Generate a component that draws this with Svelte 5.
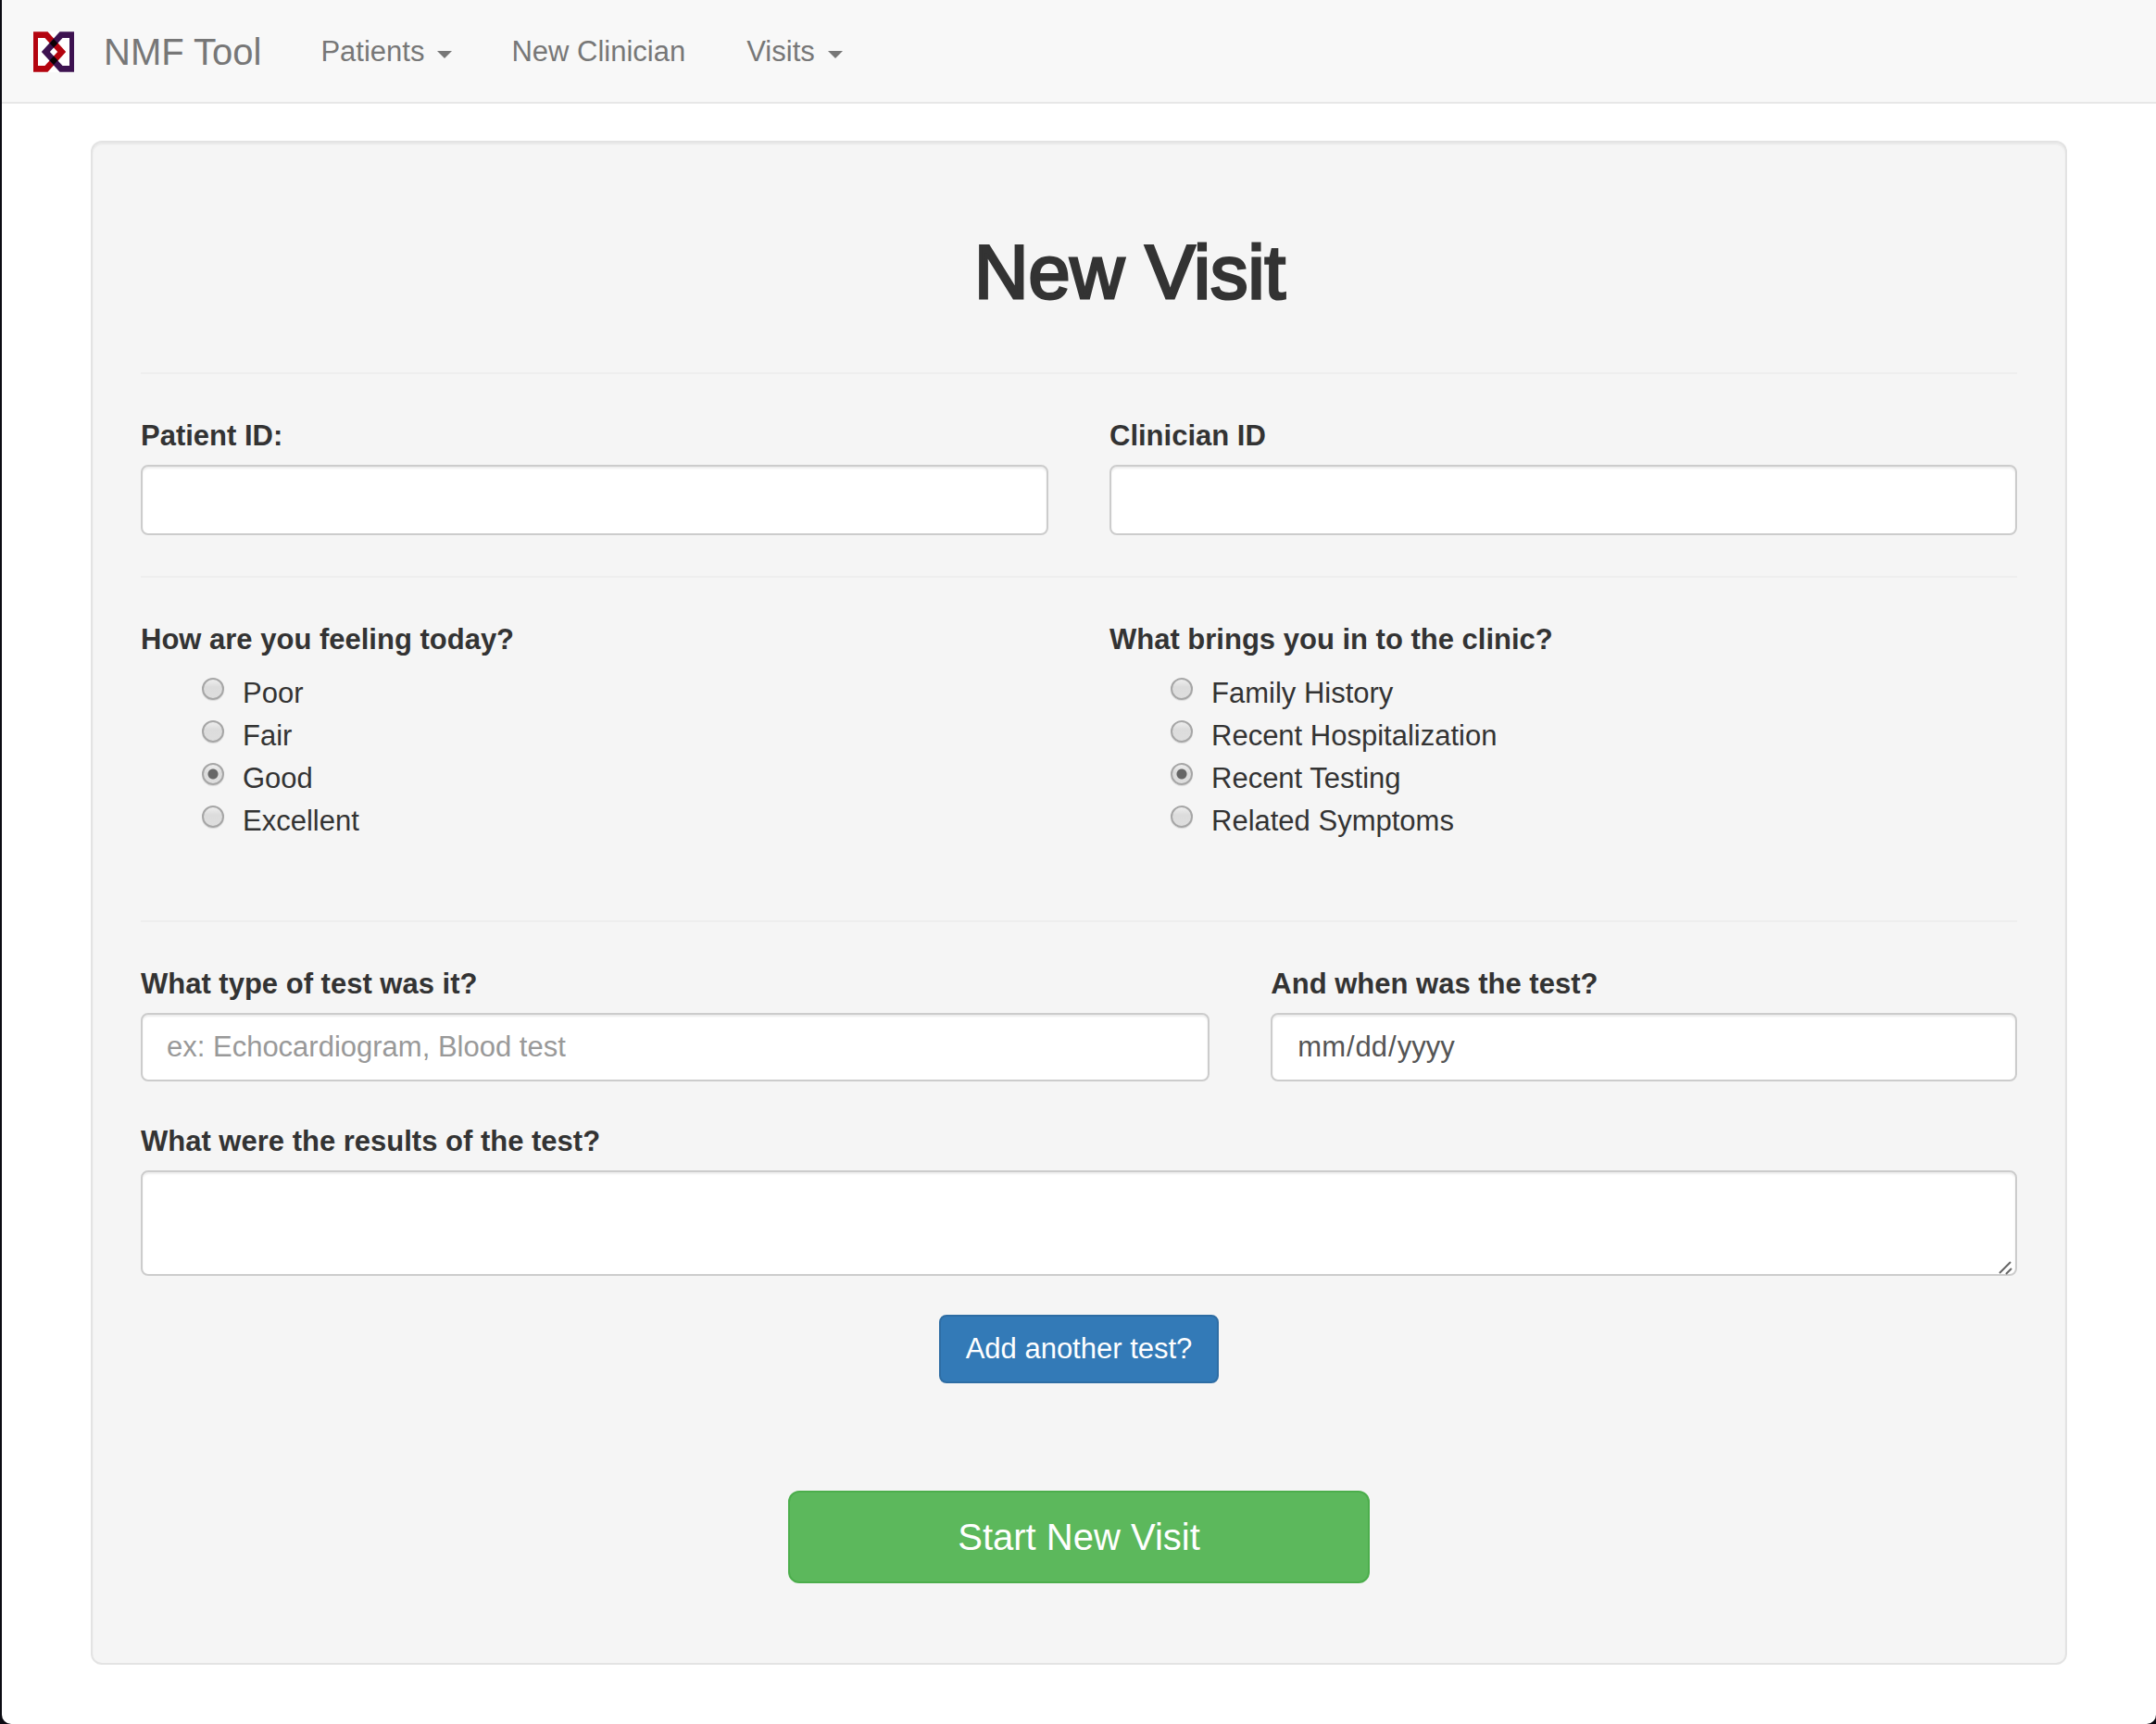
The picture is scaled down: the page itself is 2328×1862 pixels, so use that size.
<script>
  const feelings = ['Poor', 'Fair', 'Good', 'Excellent'];
  const reasons = ['Family History', 'Recent Hospitalization', 'Recent Testing', 'Related Symptoms'];
  let feeling = $state('Good');
  let reason = $state('Recent Testing');
</script>

<div class="page">
  <nav class="navbar">
    <a class="logo" href="#home" aria-label="Home">
      <svg viewBox="0 0 132 132" width="44" height="44" aria-hidden="true">
        <rect width="132" height="132" fill="#fff" />
        <path d="M5 11H42L92 66L42 121H5Z" fill="none" stroke="#b4040f" stroke-width="20" />
        <path d="M127 11H90L40 66L90 121H127Z" fill="none" stroke="#3d1250" stroke-width="20" />
        <path d="M66 24L79 38L66 52L53 38ZM66 80L79 94L66 108L53 94Z" fill="#0a0004" />
      </svg>
    </a>
    <a class="brand" href="#home">NMF Tool</a>
    <a class="item" href="#patients">Patients <span class="caret"></span></a>
    <a class="item" href="#clinician">New Clinician</a>
    <a class="item" href="#visits">Visits <span class="caret"></span></a>
  </nav>

  <main>
    <form class="well">
      <h1>New Visit</h1>
      <hr />
      <div class="row">
        <div class="half">
          <label class="title" for="patient">Patient ID:</label>
          <input class="control tall" id="patient" type="text" />
        </div>
        <div class="half">
          <label class="title" for="clinician">Clinician ID</label>
          <input class="control tall" id="clinician" type="text" />
        </div>
      </div>
      <hr />
      <div class="row choices">
        <fieldset class="half">
          <legend class="title">How are you feeling today?</legend>
          {#each feelings as name}
            <label class="choice"><input type="radio" name="feeling" value={name} bind:group={feeling} />{name}</label>
          {/each}
        </fieldset>
        <fieldset class="half">
          <legend class="title">What brings you in to the clinic?</legend>
          {#each reasons as name}
            <label class="choice"><input type="radio" name="reason" value={name} bind:group={reason} />{name}</label>
          {/each}
        </fieldset>
      </div>
      <hr />
      <div class="row">
        <div class="wide">
          <label class="title" for="test">What type of test was it?</label>
          <input class="control" id="test" type="text" placeholder="ex: Echocardiogram, Blood test" />
        </div>
        <div class="narrow">
          <label class="title" for="date">And when was the test?</label>
          <input class="control" id="date" type="date" />
        </div>
      </div>
      <div class="results">
        <label class="title" for="results">What were the results of the test?</label>
        <div class="area">
          <textarea class="control" id="results"></textarea>
          <svg class="grip" viewBox="0 0 16 16" width="16" height="16" aria-hidden="true">
            <path d="M2 14L14 2M9 15L15 9" stroke="#666" stroke-width="2" fill="none" />
          </svg>
        </div>
      </div>
      <div class="actions">
        <button class="add" type="button">Add another test?</button>
        <button class="start" type="button">Start New Visit</button>
      </div>
    </form>
  </main>
</div>

<style>
  :global(body) {
    margin: 0;
    background: #0b0b12;
  }
  .page, .page * {
    box-sizing: border-box;
  }
  .page {
    min-height: 100vh;
    margin-left: 2px;
    background: #fff;
    border-radius: 0 0 10px 10px;
    color: #333;
    font-family: "Liberation Sans", Arial, sans-serif;
    font-size: 31px;
    line-height: 46px;
  }
  .navbar {
    display: flex;
    align-items: center;
    height: 112px;
    padding: 2px 0 0 34px;
    background: #f8f8f8;
    border-bottom: 2px solid #e7e7e7;
  }
  .navbar a {
    color: #777;
    text-decoration: none;
  }
  .logo, .logo svg {
    display: block;
  }
  .brand {
    margin: 0 32px;
    font-size: 40px;
  }
  .item {
    display: flex;
    align-items: center;
    gap: 14px;
    padding: 0 32px;
  }
  .item:last-child {
    padding-left: 34px;
  }
  .caret {
    border: 8px solid transparent;
    border-top-color: #777;
    border-bottom: 0;
    margin-top: 6px;
  }
  main {
    padding: 40px 96px 64px;
  }
  .well {
    padding: 92px 52px 86px;
    background: #f5f5f5;
    border: 2px solid #e3e3e3;
    border-radius: 12px;
    box-shadow: inset 0 2px 2px rgba(0, 0, 0, 0.05);
  }
  h1 {
    margin: 0 0 60px;
    padding-left: 110px;
    font-size: 81px;
    line-height: 96px;
    font-weight: 400;
    text-align: center;
    -webkit-text-stroke: 3px #333;
  }
  hr {
    height: 2px;
    margin: 44px 0 42px;
    border: 0;
    background: #eee;
  }
  .row {
    display: grid;
    grid-template-columns: repeat(12, 1fr);
    column-gap: 66px;
  }
  .half {
    grid-column: span 6;
  }
  .wide {
    grid-column: span 7;
  }
  .narrow {
    grid-column: span 5;
  }
  fieldset {
    min-width: 0;
    margin: 0;
    padding: 0;
    border: 0;
  }
  .title {
    display: block;
    margin-bottom: 8px;
    padding: 2px 0 0;
    font-weight: 700;
  }
  .control {
    display: block;
    width: 100%;
    height: 74px;
    margin: 0;
    padding: 12px 26px;
    border: 2px solid #ccc;
    border-radius: 8px;
    background: #fff;
    box-shadow: inset 0 2px 2px rgba(0, 0, 0, 0.075);
    color: #555;
    font: inherit;
  }
  .tall {
    height: 76px;
  }
  .control::placeholder {
    color: #999;
    opacity: 1;
  }
  .control::-webkit-calendar-picker-indicator {
    display: none;
  }
  .choices {
    padding-bottom: 40px;
  }
  .choice {
    display: flex;
    align-items: flex-start;
    gap: 20px;
    padding-left: 66px;
  }
  .choices .title {
    margin-bottom: 12px;
  }
  .choice input {
    appearance: none;
    flex: none;
    width: 24px;
    height: 24px;
    margin: 6px 0 0;
    border: 2px solid #a6a6a6;
    border-radius: 50%;
    background: linear-gradient(#eee, #dcdcdc 40%, #dedede);
    box-shadow: 0 1px 1px rgba(0, 0, 0, 0.12);
  }
  .choice input:checked {
    background: radial-gradient(circle, #666 5px, transparent 6px), linear-gradient(#eee, #dcdcdc 40%, #dedede);
  }
  .results {
    margin-top: 40px;
  }
  .area {
    position: relative;
  }
  textarea.control {
    height: 114px;
    resize: vertical;
  }
  textarea.control::-webkit-resizer {
    background: transparent;
  }
  .grip {
    position: absolute;
    right: 5px;
    bottom: 1px;
    pointer-events: none;
  }
  .actions {
    display: flex;
    flex-direction: column;
    align-items: center;
    padding-top: 42px;
  }
  button {
    color: #fff;
    font: inherit;
  }
  .add {
    padding: 12px 27px;
    border: 2px solid #2e6da4;
    border-radius: 8px;
    background: #337ab7;
  }
  .start {
    width: 31%;
    margin-top: 116px;
    padding: 25px;
    border: 2px solid #4cae4c;
    border-radius: 12px;
    background: #5cb85c;
    font-size: 40px;
  }
</style>
